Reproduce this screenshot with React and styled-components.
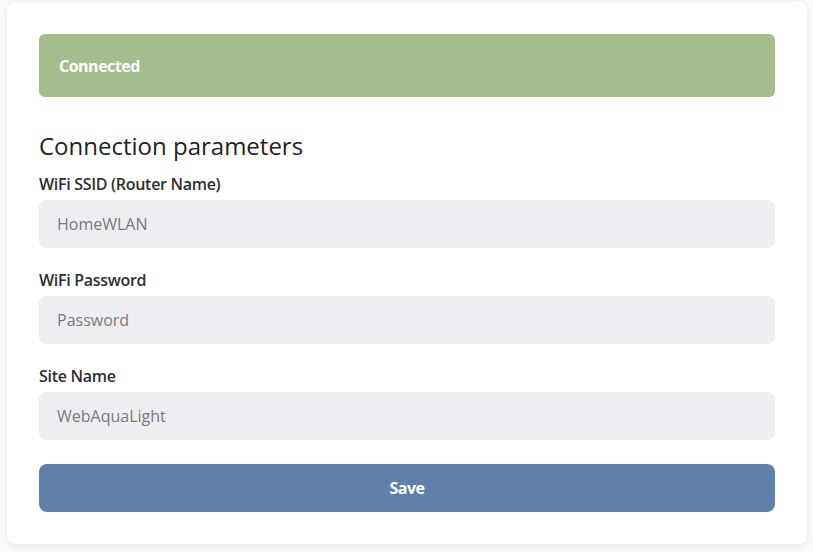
import styled, { createGlobalStyle } from "styled-components";

const GlobalStyle = createGlobalStyle`
  body {
    margin: 0;
    background: #f9f9fa;
    font-family: "Open Sans", "Liberation Sans", sans-serif;
  }
`;

const Page = styled.div`
  padding: 2px 6px 8px 7px;
`;

const Card = styled.div`
  background: #ffffff;
  border-radius: 8px;
  box-shadow: rgba(0, 0, 0, 0.08) 0px 2px 6px;
  padding: 32px;
  display: flex;
  flex-direction: column;
`;

const Banner = styled.div`
  height: 63px;
  box-sizing: border-box;
  background: #a3bd8d;
  border-radius: 6px;
  color: #ffffff;
  font-weight: 700;
  font-size: 16px;
  letter-spacing: -0.5px;
  display: flex;
  align-items: center;
  padding: 0 20px;
`;

const Heading = styled.h2`
  margin: 34px 0 12px;
  font-size: 24px;
  font-weight: 500;
  line-height: 29px;
  color: #1f2328;
`;

const Field = styled.div`
  display: flex;
  flex-direction: column;
  gap: 4px;
  margin-bottom: ${(p) => (p.$last ? "24px" : "20px")};
`;

const Label = styled.label`
  font-size: 16px;
  font-weight: 600;
  letter-spacing: -0.3px;
  line-height: 24px;
  color: #2b2f33;
`;

const Input = styled.input`
  height: 48px;
  box-sizing: border-box;
  border: none;
  border-radius: 8px;
  background: #eceef2;
  padding: 0 18px;
  font-family: inherit;
  font-size: 16px;
  color: #333;
  outline: none;

  &::placeholder {
    color: #7a7a7a;
  }
`;

const Button = styled.button`
  height: 48px;
  border: none;
  border-radius: 8px;
  background: #5f80a9;
  color: #ffffff;
  font-family: inherit;
  font-size: 16px;
  font-weight: 700;
  letter-spacing: -0.5px;
  cursor: pointer;
`;

const fields = [
  { label: "WiFi SSID (Router Name)", placeholder: "HomeWLAN" },
  { label: "WiFi Password", placeholder: "Password", type: "password" },
  { label: "Site Name", placeholder: "WebAquaLight" },
];

const App = () => {
  return (
    <Page>
      <GlobalStyle />
      <Card>
        <Banner>Connected</Banner>
        <Heading>Connection parameters</Heading>
        {fields.map((f, idx) => (
          <Field key={idx} $last={idx === fields.length - 1}>
            <Label>{f.label}</Label>
            <Input placeholder={f.placeholder} type={f.type || "text"} />
          </Field>
        ))}
        <Button>Save</Button>
      </Card>
    </Page>
  );
};

export default App;
